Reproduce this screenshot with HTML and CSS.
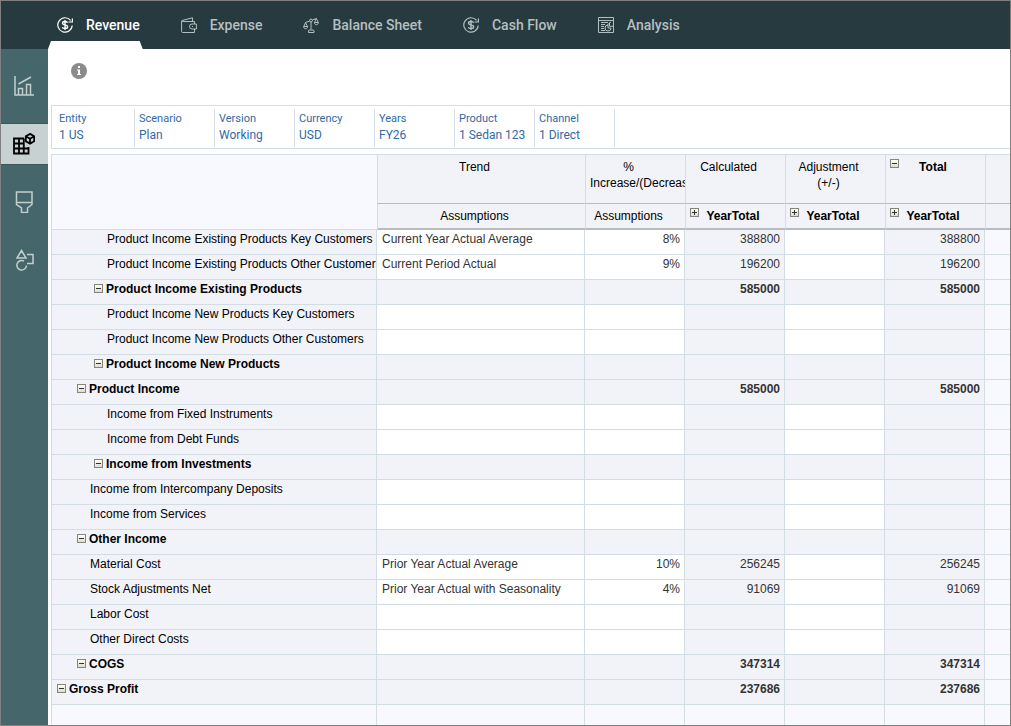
FILE: index.html
```html
<!DOCTYPE html>
<html lang="en">
<head>
    <meta charset="utf-8">
    <title>Revenue</title>
    <link rel="stylesheet" href="styles.css">
</head>
<body>
    <svg class="defs" aria-hidden="true">
        <symbol id="cycle" viewBox="0 0 16 16">
            <path d="M13.600 3.400A7.200 7.200 0 1 0 15.200 8.500M15.400 1.500V5H11.500" stroke-width="1.2"/>
            <path d="M10.6 5.8C10.2 4.900 9.3 4.500 8 4.500c-1.500 0-2.500.6-2.500 1.700 0 2.400 5.200 1.200 5.200 3.600 0 1.200-1.100 1.800-2.700 1.800-1.400 0-2.400-.5-2.700-1.500M8 3v10" stroke-width="1.4"/>
        </symbol>
    </svg>

    <header class="topbar">
        <nav class="tabs">
            <a href="#revenue" class="tab active">
                <svg class="icon"><use href="#cycle"/></svg>Revenue
            </a>
            <a href="#expense" class="tab">
                <svg class="icon" viewBox="0 0 16 16"><path d="M13.500 7V4.500H1.500C.9 4.500.5 4 1 3.500L11.500.8V4.500M.6 4v10.500c0 .6.3 1 1 1h11.900V12M15.400 7H11a2.500 2.500 0 0 0 0 5h4.400zM11 9.500h1"/></svg>Expense
            </a>
            <a href="#balance" class="tab">
                <svg class="icon" viewBox="0 0 16 16"><path d="M8 5v7.500M5.500 15.500v-1.500c0-.6.4-1 1-1h3.500c.6 0 1 .4 1 1v1.500zM2.500 5.500l4.200-1.500M9.300 3L13.500 1.500"/><circle cx="8" cy="3.500" r="1.400"/><path d="M2.500 5.500L.8 9.500M2.500 5.500L4.500 9.500M.6 9.500h4c0 3-4 3-4 0zM13.300 1.500L11.500 5.500M13.300 1.500L15.300 5.500M11.400 5.500h4c0 3-4 3-4 0z"/></svg>Balance Sheet
            </a>
            <a href="#cash" class="tab">
                <svg class="icon"><use href="#cycle"/></svg>Cash Flow
            </a>
            <a href="#analysis" class="tab">
                <svg class="icon" viewBox="0 0 16 16"><path d="M.5.5h15v15H.5zM.5 3.500h15M3 5.500h7M3 7.500h4M3 9.500h3M3 11.500h3M3 13.500h4"/><path d="M10 8a3 3 0 1 0 3 3h-3zM11.500 5.500v3.800H15M8 9l5-4"/></svg>Analysis
            </a>
        </nav>
    </header>

    <div class="layout">
        <nav class="sidebar">
            <a href="#dashboard" class="side-link" aria-label="Dashboard">
                <svg viewBox="0 0 22 22"><path d="M2 1v19h19M5.500 20v-6.500h4V20M13.500 20V9.500h4V20M5.500 9L18 2"/></svg>
            </a>
            <a href="#forms" class="side-link active" aria-label="Forms">
                <svg viewBox="0 0 22 22"><path d="M11 5.500H1V20.500h14.500V14M1 10.500h9.500M1 15.500h14.500M6 5.500v15M10.800 5.500v15"/><path d="M17 .9l4.200 2.400v4.900L17 10.600l-4.200-2.400V3.300zM12.800 3.300L17 5.700l4.200-2.400M17 5.700v4.900"/></svg>
            </a>
            <a href="#design" class="side-link" aria-label="Design">
                <svg viewBox="0 0 22 22"><path d="M3.500 1h15.500v12.500l-4.500 3.500v4.500h-6V17L3.500 13.500zM3.500 11.500H19"/></svg>
            </a>
            <a href="#rules" class="side-link" aria-label="Rules">
                <svg viewBox="0 0 22 22"><path d="M8.500 1.500l4.500 7.500H4zM14 5.500h6v9h-6M13.500 16.500a4.800 4.800 0 1 1-2.500-4.500"/></svg>
            </a>
        </nav>

        <main class="content">
            <div class="info-row">
                <button type="button" class="info" aria-label="Information">
                    <svg viewBox="0 0 16 16"><circle cx="8" cy="8" r="8"/><path d="M7 3h2v2H7zM6 6.500h3V11h1v1H6v-1h1V7.500H6z"/></svg>
                </button>
            </div>

            <div class="pov">
                <a href="#entity"><span>Entity</span>1 US</a>
                <a href="#scenario"><span>Scenario</span>Plan</a>
                <a href="#version"><span>Version</span>Working</a>
                <a href="#currency"><span>Currency</span>USD</a>
                <a href="#years"><span>Years</span>FY26</a>
                <a href="#product"><span>Product</span>1 Sedan 123</a>
                <a href="#channel"><span>Channel</span>1 Direct</a>
            </div>

            <table class="grid">
                <colgroup>
                    <col class="col-account">
                    <col class="col-trend">
                    <col class="col-num">
                    <col class="col-num">
                    <col class="col-num">
                    <col class="col-num">
                    <col>
                </colgroup>
                <thead>
                    <tr class="head-main">
                        <td class="corner" rowspan="2"></td>
                        <th>Trend</th>
                        <th>% Increase/(Decrease)</th>
                        <th>Calculated</th>
                        <th>Adjustment (+/-)</th>
                        <th class="bold"><button type="button" class="toggle" aria-label="Collapse"></button>Total</th>
                        <th></th>
                    </tr>
                    <tr class="head-sub">
                        <th>Assumptions</th>
                        <th>Assumptions</th>
                        <th class="bold"><button type="button" class="toggle plus" aria-label="Expand"></button>YearTotal</th>
                        <th class="bold"><button type="button" class="toggle plus" aria-label="Expand"></button>YearTotal</th>
                        <th class="bold"><button type="button" class="toggle plus" aria-label="Expand"></button>YearTotal</th>
                        <th></th>
                    </tr>
                </thead>
                <tbody>
                    <tr><th class="level-3">Product Income Existing Products Key Customers</th><td>Current Year Actual Average</td><td>8%</td><td>388800</td><td></td><td>388800</td><td></td></tr>
                    <tr><th class="level-3">Product Income Existing Products Other Customers</th><td>Current Period Actual</td><td>9%</td><td>196200</td><td></td><td>196200</td><td></td></tr>
                    <tr class="total"><th class="level-3"><button type="button" class="toggle" aria-label="Collapse"></button>Product Income Existing Products</th><td></td><td></td><td>585000</td><td></td><td>585000</td><td></td></tr>
                    <tr><th class="level-3">Product Income New Products Key Customers</th><td></td><td></td><td></td><td></td><td></td><td></td></tr>
                    <tr><th class="level-3">Product Income New Products Other Customers</th><td></td><td></td><td></td><td></td><td></td><td></td></tr>
                    <tr class="total"><th class="level-3"><button type="button" class="toggle" aria-label="Collapse"></button>Product Income New Products</th><td></td><td></td><td></td><td></td><td></td><td></td></tr>
                    <tr class="total"><th class="level-2"><button type="button" class="toggle" aria-label="Collapse"></button>Product Income</th><td></td><td></td><td>585000</td><td></td><td>585000</td><td></td></tr>
                    <tr><th class="level-3">Income from Fixed Instruments</th><td></td><td></td><td></td><td></td><td></td><td></td></tr>
                    <tr><th class="level-3">Income from Debt Funds</th><td></td><td></td><td></td><td></td><td></td><td></td></tr>
                    <tr class="total"><th class="level-3"><button type="button" class="toggle" aria-label="Collapse"></button>Income from Investments</th><td></td><td></td><td></td><td></td><td></td><td></td></tr>
                    <tr><th class="level-2">Income from Intercompany Deposits</th><td></td><td></td><td></td><td></td><td></td><td></td></tr>
                    <tr><th class="level-2">Income from Services</th><td></td><td></td><td></td><td></td><td></td><td></td></tr>
                    <tr class="total"><th class="level-2"><button type="button" class="toggle" aria-label="Collapse"></button>Other Income</th><td></td><td></td><td></td><td></td><td></td><td></td></tr>
                    <tr><th class="level-2">Material Cost</th><td>Prior Year Actual Average</td><td>10%</td><td>256245</td><td></td><td>256245</td><td></td></tr>
                    <tr><th class="level-2">Stock Adjustments Net</th><td>Prior Year Actual with Seasonality</td><td>4%</td><td>91069</td><td></td><td>91069</td><td></td></tr>
                    <tr><th class="level-2">Labor Cost</th><td></td><td></td><td></td><td></td><td></td><td></td></tr>
                    <tr><th class="level-2">Other Direct Costs</th><td></td><td></td><td></td><td></td><td></td><td></td></tr>
                    <tr class="total"><th class="level-2"><button type="button" class="toggle" aria-label="Collapse"></button>COGS</th><td></td><td></td><td>347314</td><td></td><td>347314</td><td></td></tr>
                    <tr class="total"><th class="level-1"><button type="button" class="toggle" aria-label="Collapse"></button>Gross Profit</th><td></td><td></td><td>237686</td><td></td><td>237686</td><td></td></tr>
                    <tr class="filler"><td></td><td></td><td></td><td></td><td></td><td></td><td></td></tr>
                </tbody>
            </table>
        </main>
    </div>
</body>
</html>
```
FILE: styles.css
```css
* {
    box-sizing: border-box;
}
body {
    display: flex;
    flex-direction: column;
    min-height: 100vh;
    margin: 0;
    border: 1px solid #808080;
    background-color: white;
    font-family: Roboto, "Noto Sans", sans-serif;
}
a {
    color: inherit;
    text-decoration: none;
}
svg {
    fill: none;
    stroke: currentColor;
}
.defs {
    display: none;
}

/* Top navigation */
.topbar {
    background-color: #273a40;
    height: 48px;
    padding-left: 56px;
}
.tabs {
    display: flex;
    gap: 41px;
    height: 100%;
}
.tab {
    position: relative;
    display: flex;
    align-items: center;
    gap: 13px;
    color: #b5bfc0;
    font-size: 14px;
    font-weight: 500;
    white-space: nowrap;
}
.tab.active {
    color: white;
}
.tab.active::after {
    content: "";
    position: absolute;
    left: -9px;
    right: -3px;
    bottom: 0;
    height: 8px;
    background-color: white;
    clip-path: polygon(3px 0, calc(100% - 3px) 0, 100% 100%, 0 100%);
}
.icon {
    width: 16px;
    height: 16px;
}

/* Left navigation */
.layout {
    display: flex;
    flex: 1;
}
.sidebar {
    display: flex;
    flex-direction: column;
    gap: 18px;
    width: 47px;
    padding-top: 17px;
    background-color: #45666b;
    color: #c3cfcf;
}
.side-link {
    display: flex;
    align-items: center;
    height: 40px;
    padding-left: 12px;
}
.side-link svg {
    width: 22px;
    height: 22px;
    stroke-width: 1.5;
}
.side-link.active {
    background-color: #c7d1d2;
    color: black;
    box-shadow: 0 -1px #3a575c, 0 1px #3a575c;
}
.side-link.active svg {
    stroke-width: 1.8;
}

/* Page content */
.content {
    flex: 1;
    min-width: 0;
    padding-left: 3px;
}
.info-row {
    height: 56px;
    padding: 14px 20px;
}
.info {
    display: block;
    width: 16px;
    height: 16px;
    padding: 0;
    border: none;
    background: none;
}
.info svg {
    display: block;
    stroke: none;
}
.info circle {
    fill: #8b8c8a;
}
.info path {
    fill: white;
}
.pov {
    display: flex;
    height: 44px;
    margin-bottom: 5px;
    padding: 3px 3px 1px;
    border: 1px solid #d3dde4;
    border-right: none;
}
.pov a {
    width: 80px;
    padding: 2px 0 0 4px;
    border-right: 1px solid #d3dde4;
    color: #3369a5;
    font-size: 12px;
    line-height: 17px;
    white-space: nowrap;
}
.pov span {
    display: block;
    font-size: 11px;
    line-height: 16px;
}

/* Data grid */
.grid {
    width: 100%;
    table-layout: fixed;
    border-collapse: separate;
    border-spacing: 0;
    border-top: 1px solid #d3dde4;
    border-left: 1px solid #d3dde4;
    font-family: "Liberation Sans", Arial, sans-serif;
    font-size: 12px;
    line-height: 16px;
}
.col-account {
    width: 325px;
}
.col-trend {
    width: 208px;
}
.col-num {
    width: 100px;
}
.grid th,
.grid td {
    overflow: hidden;
    vertical-align: top;
    font-weight: normal;
}
.grid thead th {
    padding: 4px 18px 0 4px;
    border-left: 1px solid #d3dde4;
    border-bottom: 1px solid #b9bcbf;
    background-color: #f2f3f8;
    color: black;
}
.grid .head-main th {
    height: 49px;
}
.grid .head-sub th {
    height: 26px;
    border-bottom-width: 2px;
}
.grid .corner {
    border-bottom: 1px solid #d3dde4;
    background-color: #f8f9fe;
}
.grid .bold,
.grid .total th,
.grid .total td {
    font-weight: bold;
}
.grid tbody th,
.grid tbody td {
    height: 25px;
    padding: 1px 4px 0;
    border-right: 1px solid #d3dde4;
    border-bottom: 1px solid #d3dde4;
    background-color: #f2f3f8;
    color: #333;
    text-align: right;
    white-space: nowrap;
}
.grid tbody th {
    color: black;
    text-align: left;
    text-overflow: clip;
}
.grid tbody td:nth-child(2) {
    padding-left: 5px;
    text-align: left;
}
/* Input cells */
.grid tbody td:nth-child(2),
.grid tbody td:nth-child(3),
.grid tbody td:nth-child(5) {
    background-color: white;
}
.grid tbody .total td {
    background-color: #f2f3f8;
}
.grid tbody td:last-child,
.grid tbody .filler td {
    background-color: #f8f9fe;
}
.grid tbody td:last-child {
    border-right: none;
}
.grid tbody .filler td {
    height: 20px;
    border-bottom: none;
}
.grid tbody .level-3 {
    padding-left: 55px;
}
.grid tbody .level-2 {
    padding-left: 38px;
}
.grid tbody .total .level-3 {
    padding-left: 42px;
}
.grid tbody .total .level-2 {
    padding-left: 25px;
}
.grid tbody .total .level-1 {
    padding-left: 5px;
}
.toggle {
    width: 9px;
    height: 9px;
    margin: 0 3px 0 0;
    padding: 0;
    border: 1px solid #85857d;
    background: linear-gradient(#333, #333) center / 5px 1px no-repeat, linear-gradient(#fffff4, #dcdcd0);
    vertical-align: 1px;
}
.toggle.plus {
    background: linear-gradient(#333, #333) center / 5px 1px no-repeat, linear-gradient(#333, #333) center / 1px 5px no-repeat, linear-gradient(#fffff4, #dcdcd0);
}
.grid thead .toggle {
    float: left;
    margin: 0;
}
```
